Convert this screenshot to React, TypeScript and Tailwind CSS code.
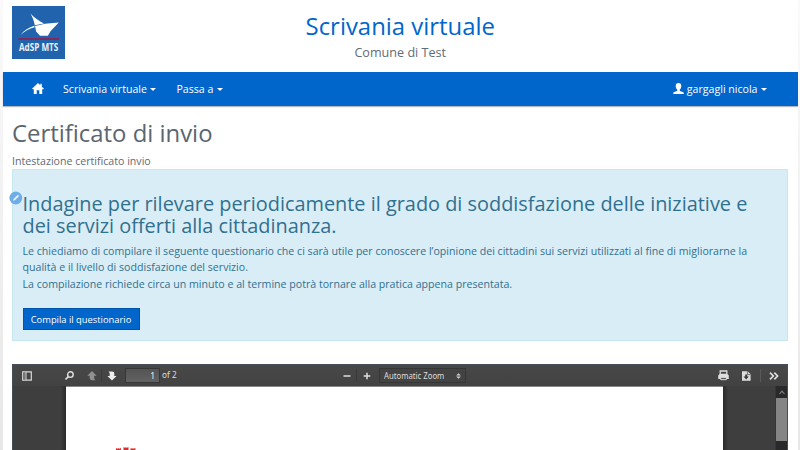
import React from "react";

function Caret({ className = "" }: { className?: string }) {
  return (
    <svg className={className} width="6" height="3" viewBox="0 0 6 3" fill="currentColor">
      <path d="M0 0h6L3 3z" />
    </svg>
  );
}

function Logo() {
  return (
    <div className="flex h-[53px] w-[53px] flex-col items-center bg-[#2263ae]">
      <svg width="53" height="36" viewBox="0 0 53 36" className="shrink-0">
        <path d="M18.5 7.5C22 11.5 27 15 32 17.6L22.8 19.2C22 15 20.5 11 18.5 7.5Z" fill="#fff" />
        <path d="M23 19.9 33 17.7 46.8 16.5 38.5 25.2 35.9 29.8H28L24.1 25.5Z" fill="#fff" />
        <path d="M22.3 19.8C17 21.5 12 24.5 8.5 29 12.5 25.5 17 22.6 22.6 21.2Z" fill="#fff" />
        <path d="M6.5 33H47" stroke="#85285c" strokeWidth="1.9" />
      </svg>
      <span className="scale-x-[0.8] whitespace-nowrap text-[10.2px] leading-[10px] font-bold text-[#e9f1fa]">AdSP MTS</span>
    </div>
  );
}

function Header() {
  return (
    <header className="grid h-[72px] grid-cols-[200px_1fr_200px] pl-[9.5px] pr-[9.5px]">
      <div className="pt-1.5"><Logo /></div>
      <div className="flex flex-col items-center">
        <h1 className="mt-[9px] whitespace-nowrap text-[23.9px] leading-[34px] text-[#0066cc]">Scrivania virtuale</h1>
        <p className="mt-px whitespace-nowrap text-[12.6px] leading-[18px] text-[#5f6b77]">Comune di Test</p>
      </div>
    </header>
  );
}

function Nav() {
  return (
    <nav className="flex h-[34px] shrink-0 items-center bg-[#0066cc] pl-[29.5px] pr-[31px] text-[10.6px] whitespace-nowrap text-white shadow-[0_1px_1px_#b5b8bc]">
      <svg className="-mt-px" width="12" height="11" viewBox="0 0 12 11" fill="currentColor">
        <path d="M6 0 0 5.7l.8.6h1V11h2.9V7.2h2.6V11h2.9V6.3h1l.8-.6-2.2-2V.8H8.3v1.4z" />
      </svg>
      <span className="ml-[19px] pt-px">Scrivania virtuale</span>
      <Caret className="ml-[3.5px] mt-px" />
      <span className="ml-5 pt-px">Passa a</span>
      <Caret className="ml-[3.5px] mt-px" />
      <svg className="-mt-px ml-auto" width="11" height="11" viewBox="0 0 11 11" fill="currentColor">
        <path d="M5.5 0C3.6 0 2.7 1.1 2.7 2.8c0 1.8.6 3.1 1.5 3.8v1.3C3.5 8.4.3 8.6.3 9.7V11h10.4V9.7c0-1.1-3.2-1.3-3.9-1.8V6.6c.9-.7 1.5-2 1.5-3.8C8.3 1.1 7.4 0 5.5 0z" />
      </svg>
      <span className="ml-[2.5px] pt-px">gargagli nicola</span>
      <Caret className="ml-[3.5px] mt-px" />
    </nav>
  );
}

function Survey() {
  return (
    <section className="relative h-[172px] border border-[#c6e9ef] bg-[#d9edf7] pl-[9.5px] pt-[23px] whitespace-nowrap text-[#31708f]">
      <svg className="absolute -left-[4px] top-[21px]" width="14" height="14" viewBox="0 0 14 14">
        <circle cx="6.8" cy="7" r="6.4" fill="#6eaee8" />
        <path d="m4.1 9.7.4-1.7 4.3-4.3 1.4 1.4-4.3 4.2z" fill="#e4f2fd" />
      </svg>
      <h2 className="text-[19.9px] leading-[22px]">
        Indagine per rilevare periodicamente il grado di soddisfazione delle iniziative e<br />
        dei servizi offerti alla cittadinanza.
      </h2>
      <p className="mt-[6px] text-[10.61px] leading-[16.4px]">
        Le chiediamo di compilare il seguente questionario che ci sarà utile per conoscere l’opinione dei cittadini sui servizi utilizzati al fine di migliorarne la<br />
        qualità e il livello di soddisfazione del servizio.<br />
        La compilazione richiede circa un minuto e al termine potrà tornare alla pratica appena presentata.
      </p>
      <button className="mt-[16px] flex h-[22px] w-[117px] items-center justify-center border border-[#0055aa] bg-[#0066cc] pt-px text-[9.35px] text-white">
        Compila il questionario
      </button>
    </section>
  );
}

function Toolbar() {
  return (
    <div className="flex h-[22px] shrink-0 items-center border-t border-[#46505a] bg-linear-to-b from-[#484848] to-[#424242] font-['Noto_Sans',sans-serif] whitespace-nowrap text-[#dedede]">
      <svg className="ml-[8.5px] shrink-0" width="10" height="10" viewBox="0 0 10 10">
        <path d="M.7.9h8.6v8.2H.7z" fill="none" stroke="#d9d9d9" strokeWidth="1.2" />
        <path d="M1.5 1.5h2v7h-2z" fill="#777" />
        <path d="M4 1v8" stroke="#d9d9d9" />
      </svg>
      <svg className="ml-[33.5px] shrink-0" width="9" height="9" viewBox="0 0 9 9" fill="none" stroke="#dedede">
        <circle cx="5.4" cy="3.6" r="2.8" strokeWidth="1.4" />
        <path d="M3.4 5.6.5 8.4" strokeWidth="1.6" />
      </svg>
      <svg className="ml-[13px] shrink-0" width="10" height="10" viewBox="0 0 10 10">
        <path d="M5 0 .3 4.8h2.4V7c0 1.4.9 2.2 2.4 2.2h3.6C7.5 8.7 7.2 8 7.2 7V4.8h2.4z" fill="#919191" />
      </svg>
      <i className="ml-[4px] h-[13px] w-px bg-[#3c3c3c]" />
      <svg className="ml-[5px] shrink-0" width="10" height="10" viewBox="0 0 10 10">
        <path d="M5 9.5.4 5h2.3V3C2.7 1.7 2.3 1 1.3.5H5c1.6 0 2.3.9 2.3 2.3V5h2.3z" fill="#eee" />
      </svg>
      <div className="ml-[7.5px] flex h-[15px] w-[35px] items-center justify-end border border-[#373737] bg-linear-to-b from-[#545454] to-[#626262] pt-px pr-[3.5px] text-[8.5px] text-[#eee]">1</div>
      <span className="ml-[2.5px] w-[16px] text-[8.2px]">of 2</span>
      <svg className="ml-[164.5px] shrink-0" width="8" height="8" viewBox="0 0 8 8"><path d="M.5 4h7" stroke="#dedede" strokeWidth="1.5" /></svg>
      <i className="ml-[5.5px] h-[13px] w-px bg-[#393939]" />
      <svg className="ml-[6px] shrink-0" width="8" height="8" viewBox="0 0 8 8"><path d="M.7 4h6.6M4 .7v6.6" stroke="#dedede" strokeWidth="1.5" /></svg>
      <div className="ml-[8px] flex h-[15px] w-[87px] items-center border border-[#363636] bg-[#434343] pt-px pl-1 pr-[4.5px] text-[8.5px]">
        <span className="origin-left scale-x-[0.91]">Automatic Zoom</span>
        <svg className="mb-px ml-auto" width="5" height="6" viewBox="0 0 5 6" fill="#d5d5d5"><path d="M.2 2.4 2.5.2l2.3 2.2zM.2 3.6h4.6L2.5 5.8z" /></svg>
      </div>
      <svg className="ml-auto shrink-0" width="11" height="11" viewBox="0 0 11 11">
        <path d="M2.2 1h6.6v3.5H2.2z" fill="none" stroke="#dedede" strokeWidth="1.3" />
        <path d="M1.2 4.3h8.6l1 1.3V9H.2V5.6z" fill="#dedede" />
        <path d="M2.7 7.3h5.6v2.4H2.7z" fill="#555" stroke="#dedede" />
      </svg>
      <svg className="ml-[13px] shrink-0" width="9" height="10" viewBox="0 0 9 10">
        <path d="M0 .3h5.6l3 3v6.4H0z" fill="#dedede" />
        <path d="M5.4.4v3.2h3.2" fill="none" stroke="#555" strokeWidth=".8" />
        <path d="M3.2 3.6h2v2h1.7L4.2 8.4 1.5 5.6h1.7z" fill="#3b3b3b" />
      </svg>
      <i className="ml-[9px] h-[13px] w-px bg-[#595959]" />
      <svg className="ml-[8px] mr-[8.5px] shrink-0" width="10" height="8" viewBox="0 0 10 8" fill="none" stroke="#dedede" strokeWidth="1.7">
        <path d="m1 .7 3.3 3.3L1 7.3M5.3.7 8.6 4 5.3 7.3" />
      </svg>
    </div>
  );
}

function PdfViewer() {
  return (
    <section className="mt-[23px] flex h-[86px] flex-col border-x border-[#454d56] bg-[#3d3d3d]">
      <Toolbar />
      <div className="flex min-h-0 flex-1">
        <div className="w-[53px] bg-linear-to-r from-[#3e3e3e] from-90% to-[#2b2b2b]" />
        <div className="flex flex-1 items-end border-t border-[#888] bg-white pl-[49.5px]">
          <svg width="20" height="3" viewBox="0 0 20 3">
            <path d="M0 1.3V3h5V1.3H3.9v.5h-.8v-.5H1.9v.5H1v-.5zM7.5.3V3h5V.3h-1.2V1h-.8V.3H9.3V1H8.6V.3zM14.5 1.3V3h5V1.3h-1.2v.5h-.8v-.5h-1.2v.5h-.7v-.5z" fill="#d32d31" />
          </svg>
        </div>
        <div className="w-[52px] bg-linear-to-r from-[#2b2b2b] to-[#3e3e3e] to-10%" />
        <div className="flex w-[12px] flex-col border-l border-[#353535] bg-[#29292b]">
          <div className="flex h-[12px] items-center justify-center">
            <svg width="6" height="5" viewBox="0 0 6 5" fill="none" stroke="#858585" strokeWidth="1.1"><path d="M.5 4 3 1.2 5.5 4" /></svg>
          </div>
          <div className="h-[43px] bg-[#858585]" />
        </div>
      </div>
    </section>
  );
}

export default function App() {
  return (
    <div className="flex h-[450px] w-[800px] overflow-hidden bg-white font-['Open_Sans','Noto_Sans',sans-serif]">
      <div className="w-[2.5px] shrink-0 bg-linear-to-b from-[#fafafa] to-[#e7e7e7]" />
      <div className="flex min-w-0 flex-1 flex-col">
        <Header />
        <Nav />
        <main className="pl-[9.5px] pr-[10px] pt-[10px]">
          <h1 className="text-[23.9px] leading-[33px] whitespace-nowrap text-[#5b6671]">Certificato di invio</h1>
          <p className="mt-[5px] text-[10.61px] leading-[15px] whitespace-nowrap text-[#5f6974]">Intestazione certificato invio</p>
          <Survey />
          <PdfViewer />
        </main>
      </div>
      <div className="w-[2px] shrink-0 bg-linear-to-b from-[#fafafa] to-[#e7e7e7]" />
    </div>
  );
}
